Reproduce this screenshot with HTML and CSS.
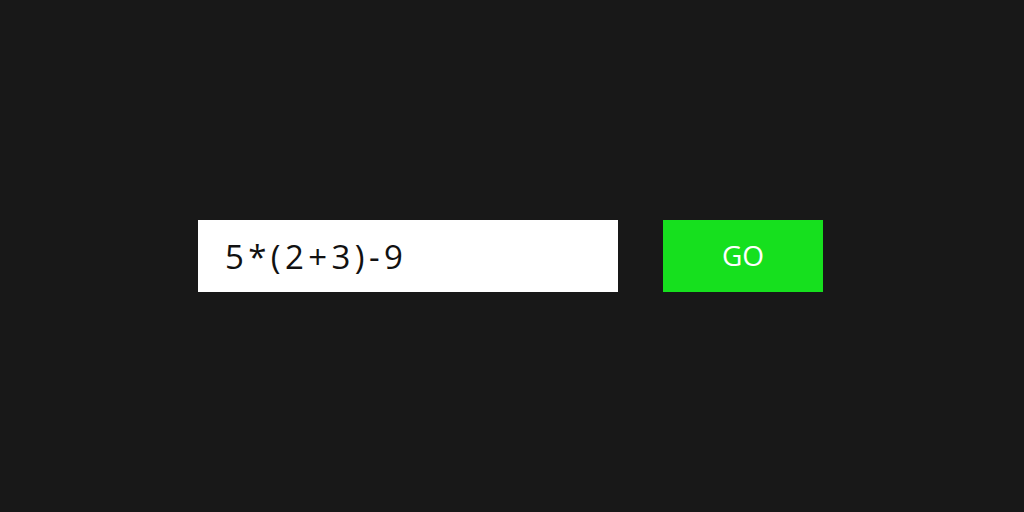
FILE: index.html
```html
<!DOCTYPE html>
<html>
<head>
<meta charset="utf-8">
<link rel="stylesheet" href="styles.css">
</head>
<body>
<div class="page">
  <form class="calc">
    <input class="expr" type="text" value="5*(2+3)-9">
    <button class="go" type="button">GO</button>
  </form>
</div>
</body>
</html>
```
FILE: styles.css
```css
html, body {
  margin: 0;
  padding: 0;
  background: #181818;
}
.page {
  width: 1024px;
  height: 512px;
  display: flex;
  justify-content: center;
  align-items: center;
}
.calc {
  display: flex;
  gap: 45px;
  margin: 0 3px 0 0;
}
.expr {
  box-sizing: border-box;
  width: 420px;
  height: 72px;
  border: none;
  outline: none;
  background: #ffffff;
  color: #111111;
  font-family: "Open Sans", sans-serif;
  font-size: 33px;
  letter-spacing: 4.4px;
  padding: 0 0 0 27px;
  margin: 0;
}
.go {
  box-sizing: border-box;
  width: 160px;
  height: 72px;
  border: none;
  background: #16e01e;
  color: #ffffff;
  font-family: "Open Sans", sans-serif;
  font-size: 28px;
  padding: 0 0 2px 0;
  margin: 0;
}
```
